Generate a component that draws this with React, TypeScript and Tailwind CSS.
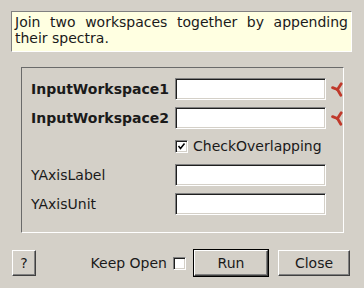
import React from "react";

const font = { fontFamily: '"DejaVu Sans", sans-serif' };

const Star = () => (
  <svg width="12" height="15" viewBox="0 0 12 15">
    <g stroke="#c0392b" strokeWidth="2.8" strokeLinecap="round" strokeLinejoin="round" fill="none">
      <path d="M6.5 7.5 L10.2 1.8" />
      <path d="M6.5 7.5 L1.6 5.6" />
      <path d="M6.5 7.5 L9.8 13.2" />
    </g>
  </svg>
);

const Field = () => (
  <div className="w-[151px] h-[22px] bg-white border border-t-[#808080] border-l-[#808080] border-b-white border-r-white shadow-[inset_1px_1px_0_#1f1f1f,inset_-1px_-1px_0_#d4d0c8]" />
);

const Check = ({ checked }: { checked?: boolean }) => (
  <div className="w-[13px] h-[13px] bg-white border border-t-[#808080] border-l-[#808080] border-b-white border-r-white shadow-[inset_1px_1px_0_#1f1f1f,inset_-1px_-1px_0_#d4d0c8] flex items-center justify-center">
    {checked && (
      <svg width="9" height="9" viewBox="0 0 9 9">
        <path d="M1.5 4 L3.5 6.5 L7.5 1.5" stroke="#000" strokeWidth="1.5" fill="none" />
      </svg>
    )}
  </div>
);

const Button = ({ label, w, isDefault }: { label: string; w: string; isDefault?: boolean }) => (
  <div className={isDefault ? "border border-black" : ""}>
    <div
      className={`${w} h-[26px] bg-[#d4d0c8] border border-t-white border-l-white border-b-[#404040] border-r-[#404040] shadow-[inset_-1px_-1px_0_#808080] flex items-center justify-center text-[14px] text-[#1a1a1a]`}
    >
      {label}
    </div>
  </div>
);

export default function App() {
  return (
    <div
      className="w-[364px] h-[288px] bg-[#d4d0c8] pt-[11px] px-[11px] flex flex-col text-[#1a1a1a]"
      style={font}
    >
      <div className="w-[341px] h-[41px] bg-[#ffffe1] border border-t-[#808080] border-l-[#808080] border-b-white border-r-white px-[3px] pt-[2px] text-[14px] leading-[16px] text-justify">
        Join two workspaces together by appending their spectra.
      </div>

      <div className="ml-[10px] mt-[15px] w-[323px] h-[166px] border border-t-[#6a6a6a] border-l-[#6a6a6a] border-b-white border-r-white pt-[10px] pl-[9px]">
        <div className="grid grid-cols-[144px_151px_auto] items-center gap-y-[7px] text-[14px]">
          <div className="font-bold">InputWorkspace1</div>
          <Field />
          <div className="pl-[5px] pt-[1px]">
            <Star />
          </div>

          <div className="font-bold">InputWorkspace2</div>
          <Field />
          <div className="pl-[5px] pt-[1px]">
            <Star />
          </div>

          <div />
          <div className="flex items-center gap-[5px] h-[21px]">
            <Check checked />
            <span>CheckOverlapping</span>
          </div>
          <div />

          <div>YAxisLabel</div>
          <Field />
          <div />

          <div>YAxisUnit</div>
          <Field />
          <div />
        </div>
      </div>

      <div className="mt-[16px] flex items-center">
        <div className="ml-[1px]">
          <Button label="?" w="w-[24px]" />
        </div>
        <div className="ml-auto mr-[3px] flex items-center">
          <span className="text-[14px]">Keep Open</span>
          <div className="ml-[6px]">
            <Check />
          </div>
          <div className="ml-[7px]">
            <Button label="Run" w="w-[74px]" isDefault />
          </div>
          <div className="ml-[9px]">
            <Button label="Close" w="w-[72px]" />
          </div>
        </div>
      </div>
    </div>
  );
}
